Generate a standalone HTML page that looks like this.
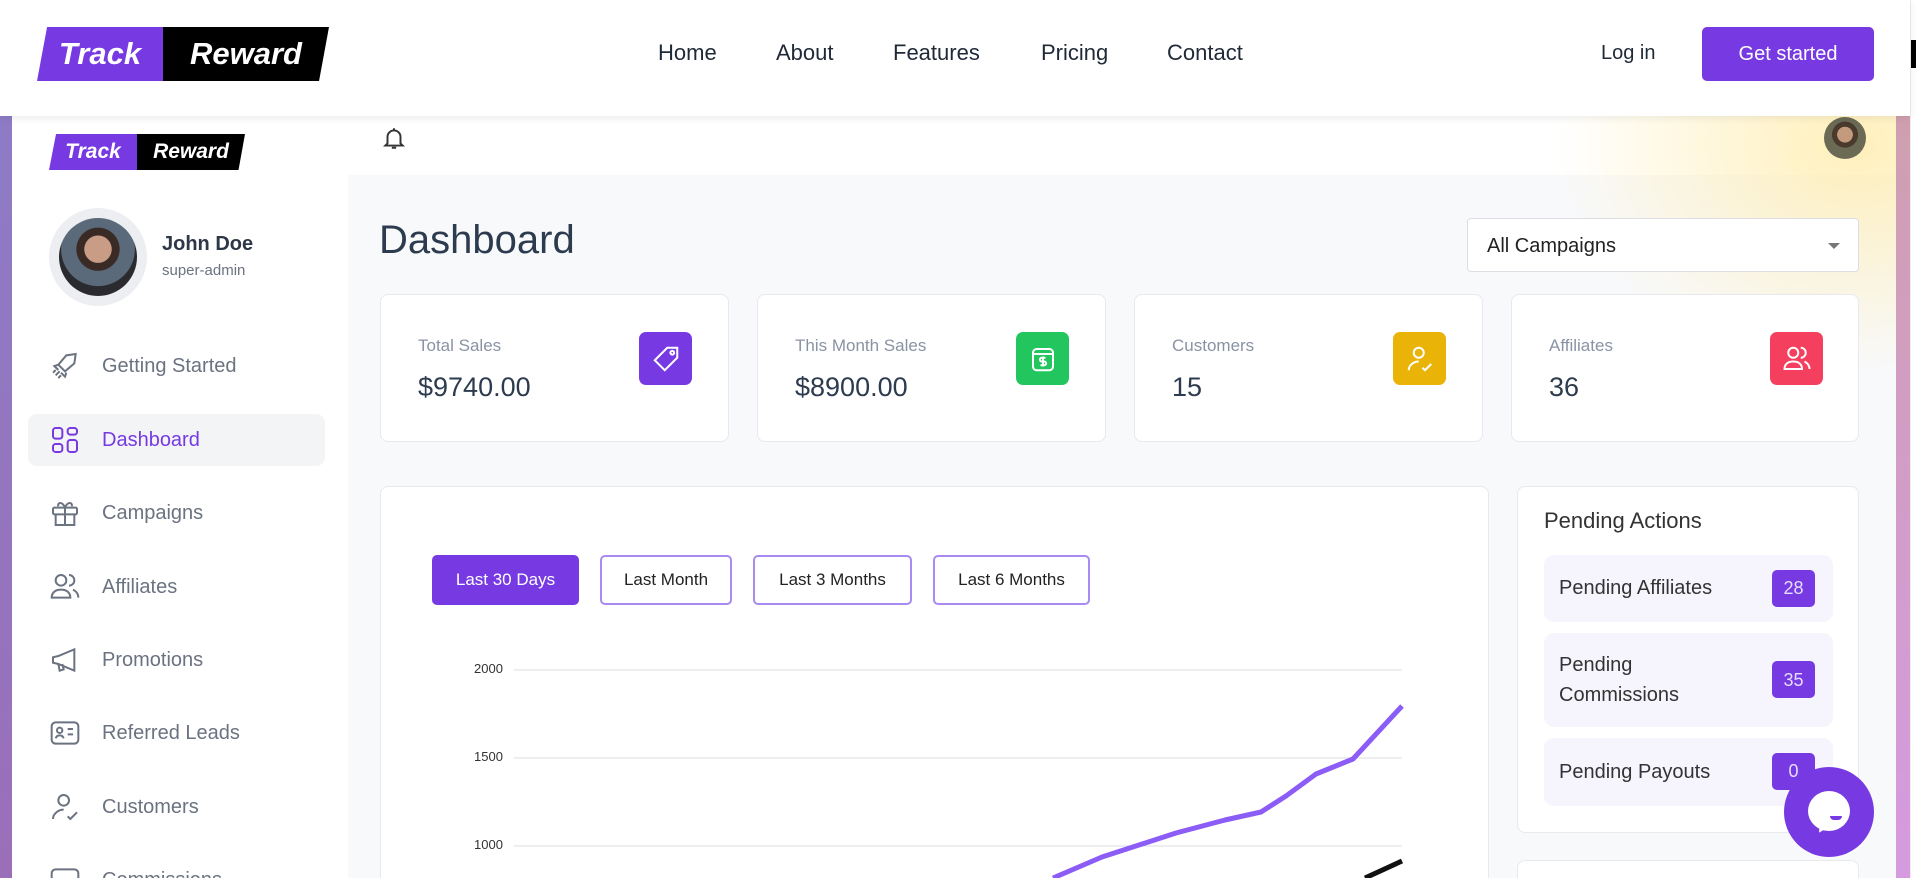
<!DOCTYPE html>
<html style="overflow:hidden;width:1920px;height:878px"><head><meta charset="utf-8"><style>
*{box-sizing:border-box;margin:0;padding:0}
body{width:1920px;height:878px;overflow:hidden;background:#f4f4f6;font-family:"Liberation Sans",sans-serif;position:relative}
.abs{position:absolute}
.nav{left:0;top:0;width:1910px;height:116px;background:#fff;box-shadow:0 2px 8px rgba(0,0,0,.08);z-index:5}
.navlink{top:40px;font-size:22px;color:#1f2937}
.logo{display:flex;height:100%}
.logo .a{background:#7639e2;color:#fff;font-style:italic;font-weight:bold;display:flex;align-items:center;justify-content:center;clip-path:polygon(8% 0,100% 0,100% 100%,0 100%)}
.logo .b{background:#000;color:#fff;font-style:italic;font-weight:bold;display:flex;align-items:center;justify-content:center;clip-path:polygon(0 0,100% 0,94% 100%,0 100%)}
.side{left:12px;top:116px;width:336px;height:762px;background:#fff}
.mi{left:49px;font-size:20px;color:#6b7280;display:flex;align-items:center}
.mi svg{width:32px;height:32px;margin-right:21px;stroke:#6b7280;fill:none;stroke-width:1.5}
.main{left:348px;top:116px;width:1548px;height:762px;background:#f8f9fb}
.card{background:#fff;border:1px solid #e8e9ee;border-radius:8px}
.lbl{font-size:17px;color:#8a93a3}
.val{font-size:27px;color:#2d3b4f}
.ib{width:53px;height:53px;border-radius:7px;display:flex;align-items:center;justify-content:center}
.ib svg{width:30px;height:30px;stroke:#fff;fill:none;stroke-width:1.6}
.btn{top:555px;height:50px;border:2px solid #a98af0;border-radius:5px;font-size:17px;color:#222;display:flex;align-items:center;justify-content:center;background:#fff}
.pi{left:1544px;width:289px;background:#f6f5fd;border-radius:10px;font-size:20px;color:#333;display:flex;align-items:center;padding-left:15px}
.badge{position:absolute;right:18px;width:43px;height:37px;background:#7639e2;border-radius:5px;color:#e6ddff;font-size:18px;display:flex;align-items:center;justify-content:center}
.yl{font-size:13px;color:#333}
</style></head><body>
<div class="abs" style="left:0;top:116px;width:12px;height:762px;background:linear-gradient(#8e7bc6,#9a6fb8)"></div>
<div class="abs" style="left:1896px;top:116px;width:14px;height:762px;background:linear-gradient(#cf9fb0,#d69ae0)"></div>
<div class="abs" style="left:1910px;top:0;width:10px;height:878px;background:#fff;border-left:1px solid #eee"></div>
<div class="abs" style="left:1911px;top:40px;width:5px;height:28px;background:#000"></div>

<div class="abs nav">
 <div class="abs logo" style="left:37px;top:27px;width:292px;height:54px">
  <div class="a" style="width:126px;font-size:31px">Track</div><div class="b" style="width:166px;font-size:31px">Reward</div>
 </div>
 <div class="abs navlink" style="left:658px">Home</div>
 <div class="abs navlink" style="left:776px">About</div>
 <div class="abs navlink" style="left:893px">Features</div>
 <div class="abs navlink" style="left:1041px">Pricing</div>
 <div class="abs navlink" style="left:1167px">Contact</div>
 <div class="abs" style="left:1601px;top:42px;font-size:20px;color:#1f2937">Log in</div>
 <div class="abs" style="left:1702px;top:27px;width:172px;height:54px;background:#7639e2;border-radius:5px;color:#fff;font-size:20px;display:flex;align-items:center;justify-content:center">Get started</div>
</div>

<div class="abs side"></div>
<div class="abs main"></div>
<div class="abs" style="left:348px;top:116px;width:1548px;height:59px;background:#fff"></div>
<div class="abs" style="left:1500px;top:116px;width:396px;height:300px;background:radial-gradient(ellipse at 90% 10%,rgba(255,236,170,.8),rgba(255,240,200,0) 60%)"></div>

<div class="abs logo" style="left:49px;top:134px;width:196px;height:36px">
 <div class="a" style="width:88px;font-size:21px">Track</div><div class="b" style="width:108px;font-size:21px">Reward</div>
</div>
<div class="abs" style="left:49px;top:208px;width:98px;height:98px;border-radius:50%;background:#eceef2"></div>
<div class="abs" style="left:59px;top:218px;width:78px;height:78px;border-radius:50%;background:radial-gradient(circle at 50% 40%,#c99c85 0 22%,#3a2a26 23% 35%,#5b6a7a 36% 60%,#2b2b2f 61%)"></div>
<div class="abs" style="left:162px;top:233px;font-size:20px;font-weight:bold;color:#2d3748">John Doe</div>
<div class="abs" style="left:162px;top:262px;font-size:15px;color:#6b7280">super-admin</div>

<div class="abs" style="left:28px;top:414px;width:297px;height:52px;background:#f3f4f6;border-radius:9px"></div>
<div class="abs mi" style="top:350px"><svg viewBox="0 0 24 24"><path d="M10 14l-3-3 6-7 7-1-1 7-7 6z M7 11l-3 1 3 3M13 17l-1 3-3-3M5 19l3-3M3 17l2-2M7 21l2-2"/></svg>Getting Started</div>
<div class="abs mi" style="top:424px;color:#7639e2"><svg viewBox="0 0 24 24" style="stroke:#7639e2"><rect x="3" y="3" width="7" height="8" rx="2"/><rect x="14" y="3" width="7" height="5" rx="2"/><rect x="3" y="15" width="7" height="6" rx="2"/><rect x="14" y="12" width="7" height="9" rx="2"/></svg>Dashboard</div>
<div class="abs mi" style="top:497px"><svg viewBox="0 0 24 24"><rect x="3" y="8" width="18" height="5" rx="1"/><path d="M5 13v8h14v-8M12 8v13M12 8c-2-5-6-4-5-1M12 8c2-5 6-4 5-1"/></svg>Campaigns</div>
<div class="abs mi" style="top:571px"><svg viewBox="0 0 24 24"><circle cx="9" cy="7" r="4"/><path d="M2 20c0-4 3-6 7-6s7 2 7 6zM15 3a4 4 0 010 8M18 14c2 1 4 3 4 6"/></svg>Affiliates</div>
<div class="abs mi" style="top:644px"><svg viewBox="0 0 24 24"><path d="M3 10v4l4 1 12 5V4L7 9zM7 15l1 5 3-1-1-4"/></svg>Promotions</div>
<div class="abs mi" style="top:717px"><svg viewBox="0 0 24 24"><rect x="2" y="4" width="20" height="16" rx="3"/><circle cx="8" cy="10" r="2"/><path d="M5 16c1-3 5-3 6 0M14 9h4M14 13h4"/></svg>Referred Leads</div>
<div class="abs mi" style="top:791px"><svg viewBox="0 0 24 24"><circle cx="11" cy="7" r="4"/><path d="M3 21c0-4 4-7 8-7M14 19l2 2 5-5"/></svg>Customers</div>
<div class="abs mi" style="top:864px"><svg viewBox="0 0 24 24"><rect x="2" y="4" width="20" height="16" rx="3"/></svg>Commissions</div>

<svg class="abs" style="left:381px;top:124px" width="26" height="28" viewBox="0 0 24 24" fill="none" stroke="#333" stroke-width="1.8"><path d="M6 17V11a6 6 0 0112 0v6l2 2H4zM10 21h4M12 3v2"/></svg>
<div class="abs" style="left:1824px;top:117px;width:42px;height:42px;border-radius:50%;background:radial-gradient(circle at 50% 42%,#c49a7d 0 24%,#4a3a2e 25% 40%,#6b6a55 41%)"></div>

<div class="abs" style="left:379px;top:218px;font-size:40px;color:#2d3b4f">Dashboard</div>
<div class="abs" style="left:1467px;top:218px;width:392px;height:54px;background:#fff;border:1px solid #dcdee3;border-radius:4px;font-size:20px;color:#222;padding:16px 0 0 19px">All Campaigns<div class="abs" style="right:18px;top:24px;border:6px solid transparent;border-top:6px solid #777"></div></div>

<div class="abs card" style="left:380px;top:294px;width:349px;height:148px"></div>
<div class="abs card" style="left:757px;top:294px;width:349px;height:148px"></div>
<div class="abs card" style="left:1134px;top:294px;width:349px;height:148px"></div>
<div class="abs card" style="left:1511px;top:294px;width:348px;height:148px"></div>

<div class="abs lbl" style="left:418px;top:336px">Total Sales</div><div class="abs val" style="left:418px;top:372px">$9740.00</div>
<div class="abs ib" style="left:639px;top:332px;background:#7639e2"><svg viewBox="0 0 24 24"><path d="M13 3h8v8L11 21 3 13z"/><circle cx="17" cy="7" r="1.5"/></svg></div>
<div class="abs lbl" style="left:795px;top:336px">This Month Sales</div><div class="abs val" style="left:795px;top:372px">$8900.00</div>
<div class="abs ib" style="left:1016px;top:332px;background:#22c55e"><svg viewBox="0 0 24 24"><rect x="4" y="4" width="16" height="17" rx="3"/><path d="M4 8h16M14 11h-3a1.5 1.5 0 000 3h2a1.5 1.5 0 010 3h-3M12 10v8"/></svg></div>
<div class="abs lbl" style="left:1172px;top:336px">Customers</div><div class="abs val" style="left:1172px;top:372px">15</div>
<div class="abs ib" style="left:1393px;top:332px;background:#eab308"><svg viewBox="0 0 24 24"><circle cx="11" cy="7" r="4"/><path d="M3 21c0-4 4-7 8-7M14 19l2 2 5-5"/></svg></div>
<div class="abs lbl" style="left:1549px;top:336px">Affiliates</div><div class="abs val" style="left:1549px;top:372px">36</div>
<div class="abs ib" style="left:1770px;top:332px;background:#f43f5e"><svg viewBox="0 0 24 24"><circle cx="9" cy="7" r="4"/><path d="M2 20c0-4 3-6 7-6s7 2 7 6zM15 3a4 4 0 010 8M18 14c2 1 4 3 4 6"/></svg></div>

<div class="abs card" style="left:380px;top:486px;width:1109px;height:400px"></div>
<div class="abs btn" style="left:432px;width:147px;background:#7639e2;border-color:#7639e2;color:#fff">Last 30 Days</div>
<div class="abs btn" style="left:600px;width:132px">Last Month</div>
<div class="abs btn" style="left:753px;width:159px">Last 3 Months</div>
<div class="abs btn" style="left:933px;width:157px">Last 6 Months</div>
<div class="abs yl" style="left:474px;top:661px">2000</div>
<div class="abs yl" style="left:474px;top:749px">1500</div>
<div class="abs yl" style="left:474px;top:837px">1000</div>
<svg class="abs" style="left:0;top:0" width="1920" height="878">
<g stroke="#e3e4e8" stroke-width="1.2"><line x1="514" y1="670" x2="1402" y2="670"/><line x1="514" y1="758" x2="1402" y2="758"/><line x1="514" y1="846" x2="1402" y2="846"/></g>
<path d="M1053 878 L1102 857 L1176 833 L1225 820 L1261 812 L1286 796 L1316 774 L1353 759 L1402 706" fill="none" stroke="#8b5cf6" stroke-width="5" stroke-linejoin="round"/>
<path d="M1365 878 L1402 861" fill="none" stroke="#111" stroke-width="5"/>
</svg>

<div class="abs card" style="left:1517px;top:486px;width:342px;height:347px"></div>
<div class="abs" style="left:1544px;top:508px;font-size:22px;color:#333">Pending Actions</div>
<div class="abs pi" style="top:555px;height:67px">Pending Affiliates<div class="badge" style="top:15px">28</div></div>
<div class="abs pi" style="top:633px;height:94px;line-height:30px">Pending<br>Commissions<div class="badge" style="top:28px">35</div></div>
<div class="abs pi" style="top:738px;height:68px">Pending Payouts<div class="badge" style="top:15px">0</div></div>
<div class="abs card" style="left:1517px;top:860px;width:342px;height:30px"></div>

<div class="abs" style="left:1784px;top:767px;width:90px;height:90px;border-radius:50%;background:#7639e2"></div>
<div class="abs" style="left:1808px;top:791px;width:42px;height:40px;border-radius:50%;background:#fff"></div>
<div class="abs" style="left:1817px;top:822px;width:0;height:0;border-left:4px solid transparent;border-right:10px solid transparent;border-top:12px solid #fff;transform:rotate(20deg)"></div>
<div class="abs" style="left:1830px;top:816px;width:12px;height:4px;border-radius:0 0 6px 6px;background:#7639e2"></div>
</body></html>
